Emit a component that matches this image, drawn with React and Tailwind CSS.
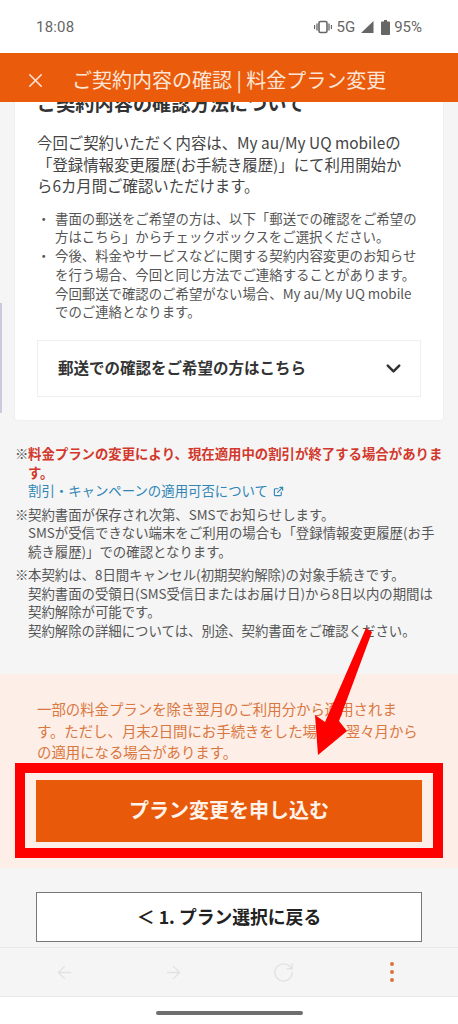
import { X, ChevronDown, ArrowLeft, ArrowRight, RotateCw, ExternalLink } from "lucide-react";

const font = { fontFamily: '"Noto Sans CJK JP", "Noto Sans", sans-serif' };

const StatusBar = () => (
  <div className="flex h-[53px] shrink-0 items-center justify-between bg-white pl-[36px] pr-[36px] pt-[1px] text-[#666]">
    <span className="text-[15px] tracking-[0.2px]" style={{ fontFamily: "Roboto, sans-serif" }}>18:08</span>
    <div className="flex items-center" style={{ fontFamily: "Roboto, sans-serif" }}>
      <svg width="18" height="14" viewBox="0 0 18 14" className="mr-[4px]">
        <rect x="5" y="1.5" width="8" height="11" rx="1.5" fill="none" stroke="#666" strokeWidth="1.6" />
        <path d="M0.5 5v4M3 3.5v7M15 3.5v7M17.5 5v4" stroke="#666" strokeWidth="1.3" />
      </svg>
      <span className="mr-[5px] text-[15px]">5G</span>
      <svg width="14" height="14" viewBox="0 0 14 14" className="mr-[7px]"><path d="M13.500 1v12H1z" fill="#666" /></svg>
      <svg width="9" height="15" viewBox="0 0 9 15" className="mr-[4px]"><path d="M3 0h3v1.500h2.200a.8.8 0 0 1 .8.8v11.900a.8.8 0 0 1-.8.8H.8a.8.8 0 0 1-.8-.8V2.300a.8.8 0 0 1 .8-.8H3z" fill="#666" /></svg>
      <span className="text-[15px]">95%</span>
    </div>
  </div>
);

const Header = () => (
  <div className="relative z-10 flex h-[49px] shrink-0 items-center bg-[#ea5b0c] pl-[24px] pt-[5px] text-[#fde6d8]">
    <X size={23} strokeWidth={1.6} />
    <span className="ml-[25px] text-[20px] leading-none">ご契約内容の確認 | 料金プラン変更</span>
  </div>
);

const Card = () => (
  <div className="mx-[15px] -mt-[13px] h-[331px] rounded-b-[3px] bg-white px-[22px] shadow-[0_0_2px_rgba(0,0,0,0.08)]">
    <h2 className="text-[19.2px] font-bold leading-[28px] text-[#333]">ご契約内容の確認方法について</h2>
    <p className="mt-[15px] text-[15.4px] leading-[21.6px] text-[#444]">
      今回ご契約いただく内容は、My au/My UQ mobileの
      <br />
      「登録情報変更履歴(お手続き履歴)」にて利用開始か
      <br />
      ら6カ月間ご確認いただけます。
    </p>
    <ul className="mt-[12px] text-[13.4px] leading-[18.7px] text-[#555]">
      <li className="flex">
        <span className="w-[18px] shrink-0">・</span>
        <span>書面の郵送をご希望の方は、以下「郵送での確認をご希望の方はこちら」からチェックボックスをご選択ください。</span>
      </li>
      <li className="flex">
        <span className="w-[18px] shrink-0">・</span>
        <span>
          今後、料金やサービスなどに関する契約内容変更のお知らせを行う場合、今回と同じ方法でご連絡することがあります。
          <br />
          今回郵送で確認のご希望がない場合、My au/My UQ mobileでのご連絡となります。
        </span>
      </li>
    </ul>
    <div className="mt-[19px] flex h-[57px] items-center justify-between border border-[#eee] pl-[20px] pr-[15px] pb-[1px]">
      <span className="text-[15.5px] font-bold text-[#333]">郵送での確認をご希望の方はこちら</span>
      <ChevronDown size={23} strokeWidth={2.6} className="text-[#333]" />
    </div>
  </div>
);

const Notes = () => (
  <div className="mt-[24px] px-[15px] text-[13.4px] leading-[18.5px] text-[#555]">
    <div className="flex">
      <span className="w-[13px] shrink-0">※</span>
      <div>
        <p className="font-bold text-[#d2382b]">料金プランの変更により、現在適用中の割引が終了する場合があります。</p>
        <p className="text-[#2f86b5]">
          割引・キャンペーンの適用可否について
          <ExternalLink size={11} strokeWidth={2.5} className="ml-[5px] inline align-[-0.5px]" />
        </p>
      </div>
    </div>
    <div className="mt-[5px] flex">
      <span className="w-[13px] shrink-0">※</span>
      <p>
        契約書面が保存され次第、SMSでお知らせします。
        <br />
        SMSが受信できない端末をご利用の場合も「登録情報変更履歴(お手続き履歴)」での確認となります。
      </p>
    </div>
    <div className="mt-[5px] flex">
      <span className="w-[13px] shrink-0">※</span>
      <p>
        本契約は、8日間キャンセル(初期契約解除)の対象手続きです。
        <br />
        契約書面の受領日(SMS受信日またはお届け日)から8日以内の期間は契約解除が可能です。
        <br />
        契約解除の詳細については、別途、契約書面をご確認ください。
      </p>
    </div>
  </div>
);

const Apply = () => (
  <div className="mt-[35px] h-[194px] bg-[#fdeee7] px-[15px] pt-[24px]">
    <p className="px-[22px] text-[14.4px] leading-[21.6px] text-[#d9773f]">
      一部の料金プランを除き翌月のご利用分から適用されます。ただし、月末2日間にお手続きをした場合、翌々月からの適用になる場合があります。
    </p>
    <div className="border-[10px] border-[#f00] px-[11px] pb-[6px] pt-[7px]">
      <div className="flex h-[62px] items-center justify-center bg-[#e8590a] pb-[1px] text-[20px] font-bold text-[#fff3ea]">
        プラン変更を申し込む
      </div>
    </div>
  </div>
);

const BottomNav = () => (
  <div className="mt-auto flex h-[50px] shrink-0 items-center border-y border-[#e9e9e9] bg-[#f5f5f5] text-[#e2e2e2]">
    <div className="flex w-[109px] justify-center pl-[20px]"><ArrowLeft size={21} strokeWidth={1.5} /></div>
    <div className="flex w-[109px] justify-center pl-[20px]"><ArrowRight size={21} strokeWidth={1.5} /></div>
    <div className="flex w-[109px] justify-center pl-[21px]"><RotateCw size={23} strokeWidth={1.5} /></div>
    <div className="flex flex-1 flex-col items-center gap-[4px] pr-[2px]">
      <span className="h-[4px] w-[4px] rounded-full bg-[#d9773f]" />
      <span className="h-[4px] w-[4px] rounded-full bg-[#d9773f]" />
      <span className="h-[4px] w-[4px] rounded-full bg-[#d9773f]" />
    </div>
  </div>
);

export default function App() {
  return (
    <div className="relative flex h-[1024px] w-[458px] flex-col overflow-hidden bg-[#f5f5f5]" style={font}>
      <StatusBar />
      <Header />
      <div className="flex flex-1 flex-col">
        <Card />
        <Notes />
        <Apply />
        <div className="px-[36px] pt-[24px]">
          <div className="flex h-[50px] items-center justify-center border border-[#777] bg-white pb-[1px] text-[17.8px] font-bold text-[#222]">
            ＜ 1. プラン選択に戻る
          </div>
        </div>
        <BottomNav />
      </div>
      <div className="flex h-[27px] shrink-0 items-center justify-center bg-white pt-[5px]">
        <div className="h-[4px] w-[147px] rounded-full bg-[#6e6e6e]" />
      </div>
      {/* annotation arrow + scrollbar sliver */}
      <svg className="absolute left-0 top-0" width="458" height="1024" viewBox="0 0 458 1024">
        <polygon points="366,628 372,632 339,721 347,731 318,755 315,715 325,722" fill="#f00" />
      </svg>
      <div className="absolute left-0 top-[303px] h-[110px] w-[2px] bg-[#c9cbdc]" />
    </div>
  );
}
